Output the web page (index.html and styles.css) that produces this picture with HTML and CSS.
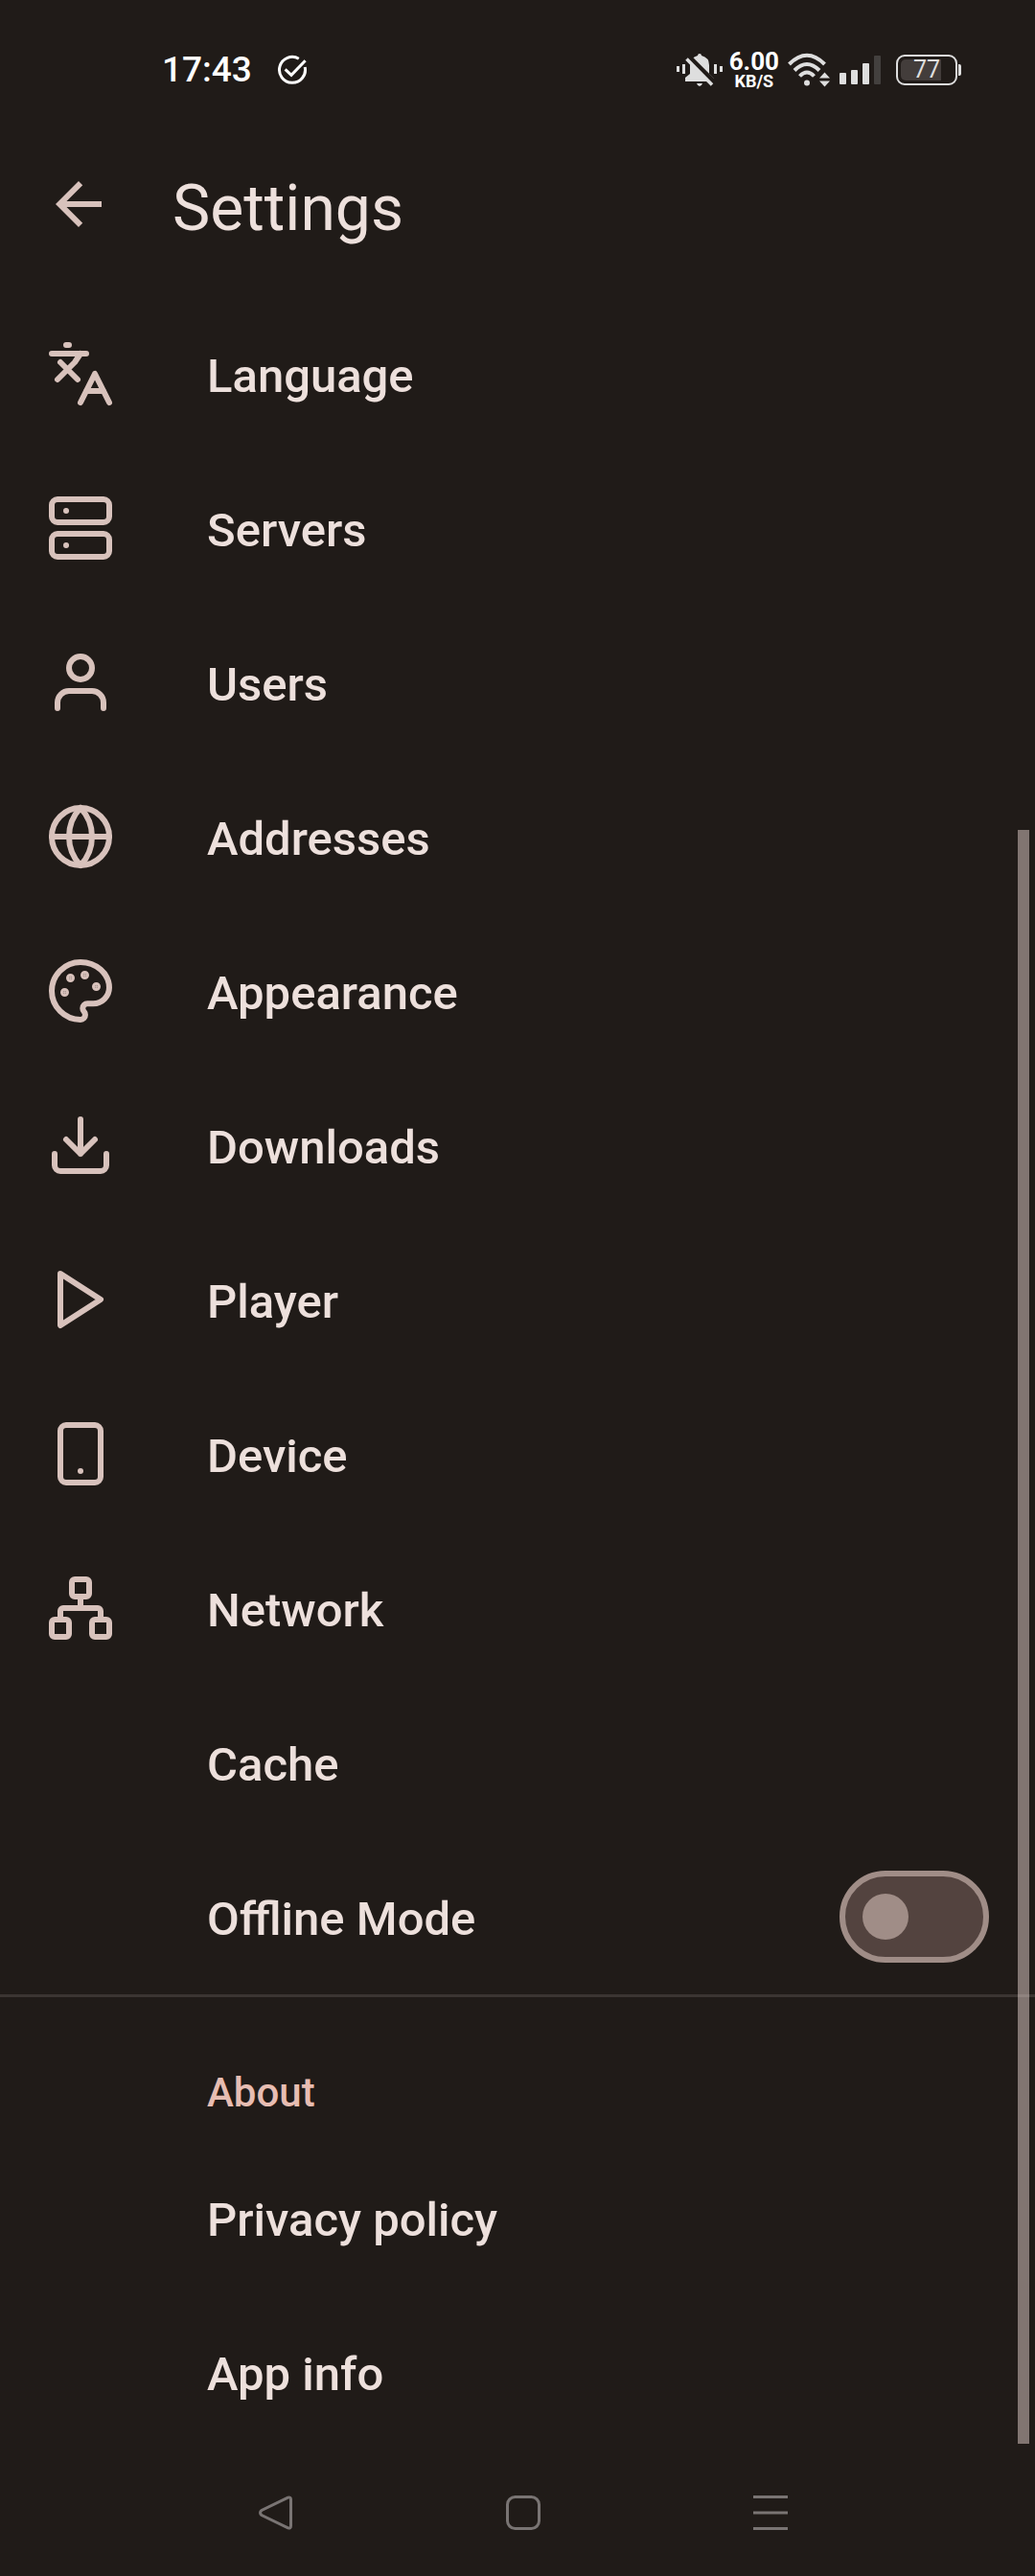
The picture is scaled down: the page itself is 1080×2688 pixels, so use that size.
FILE: index.html
```html
<!DOCTYPE html>
<html lang="en">
<head>
<meta charset="utf-8">
<meta name="viewport" content="width=device-width, initial-scale=1">
<title>Settings</title>
<link rel="stylesheet" href="styles.css">
</head>
<body>
<div class="status-bar">
  <span class="clock">17:43</span>
  <svg class="status-check" width="32" height="32" viewBox="0 0 32 32" fill="none" stroke="#fff" stroke-width="3" aria-hidden="true">
    <path d="M22.8 4.2A13.5 13.5 0 1 0 29.2 13"/><path d="M8.6 15.4l6.4 6L29.6 6.2"/>
  </svg>
  <div class="status-right">
    <svg width="48" height="34" viewBox="0 0 48 34" fill="#dedede" aria-hidden="true">
      <path d="M0 13h3v6H0zM6 11h3v10H6zM39 11h3v10h-3zM45 13h3v6h-3zM21 31h6q-1 3-3 3t-3-3z"/>
      <path d="M22 2q0-2 2-2t2 2q8 2 8 10v9l5 5v3H9v-4l5-4v-9q0-8 8-10z"/>
      <path d="M9 0L42 33" stroke="#201b18" stroke-width="6"/>
      <path d="M10.5 5.5L37 32.500" stroke="#dedede" stroke-width="3.500"/>
    </svg>
    <div class="speed"><span class="speed-value">6.00</span><span class="speed-unit">KB/S</span></div>
    <svg class="wifi" width="46" height="36" viewBox="0 0 46 36" aria-hidden="true">
      <g fill="none" stroke="#dedede" stroke-width="4">
        <path d="M2.500 12Q21 -6.500 39.500 12"/><path d="M8 18.500Q21 5.500 34 18.500"/><path d="M13.500 24.500Q21 16.500 28.500 24.500"/>
      </g>
      <circle cx="21" cy="31.500" r="3" fill="#dedede"/>
      <path d="M34 26.500l5.500-6 5.500 6zM34 29.500l5.500 6 5.500-6z" fill="#dedede"/>
    </svg>
    <svg class="signal" width="44" height="30" viewBox="0 0 44 30" fill="#dedede" aria-hidden="true">
      <rect y="18" width="7" height="12" rx="1"/><rect x="12" y="15" width="7" height="15" rx="1"/><rect x="24" y="8" width="7" height="22" rx="1"/><rect x="36" width="7" height="30" rx="1" fill="#43403e"/>
    </svg>
    <div class="battery"><span class="battery-level">77</span></div>
  </div>
</div>

<header class="app-bar">
  <button class="back" type="button" aria-label="Back">
    <svg width="72" height="72" viewBox="0 0 24 24" fill="currentColor"><path d="M20 11H7.830l5.590-5.590L12 4l-8 8 8 8 1.410-1.410L7.830 13H20z"/></svg>
  </button>
  <h1 class="title">Settings</h1>
</header>

<main class="content">
  <nav class="list" aria-label="Settings">
    <a class="row" href="#language"><svg class="icon" viewBox="0 0 24 24"><path d="m5 8 6 6M4 14l6-6 2-3M2 5h12M7 2h1M22 22l-5-10-5 10M14 18h6"/></svg><span class="label">Language</span></a>
    <a class="row" href="#servers"><svg class="icon" viewBox="0 0 24 24"><rect x="2" y="2" width="20" height="8" rx="2"/><rect x="2" y="14" width="20" height="8" rx="2"/><path d="M7 6h.01M7 18h.01"/></svg><span class="label">Servers</span></a>
    <a class="row" href="#users"><svg class="icon" viewBox="0 0 24 24"><path d="M20 21v-2a4 4 0 0 0-4-4H8a4 4 0 0 0-4 4v2"/><circle cx="12" cy="7" r="4"/></svg><span class="label">Users</span></a>
    <a class="row" href="#addresses"><svg class="icon" viewBox="0 0 24 24"><circle cx="12" cy="12" r="10"/><path d="M12 2a14.500 14.500 0 0 0 0 20 14.500 14.500 0 0 0 0-20M2 12h20"/></svg><span class="label">Addresses</span></a>
    <a class="row" href="#appearance"><svg class="icon" viewBox="0 0 24 24"><g fill="currentColor"><circle cx="13.500" cy="6.500" r=".5"/><circle cx="17.500" cy="10.500" r=".5"/><circle cx="8.500" cy="7.500" r=".5"/><circle cx="6.500" cy="12.500" r=".5"/></g><path d="M12 2C6.500 2 2 6.500 2 12s4.500 10 10 10c.926 0 1.648-.746 1.648-1.688 0-.437-.18-.835-.437-1.125-.29-.289-.438-.652-.438-1.125a1.640 1.640 0 0 1 1.668-1.668h1.996c3.051 0 5.555-2.503 5.555-5.554C21.965 6.012 17.461 2 12 2z"/></svg><span class="label">Appearance</span></a>
    <a class="row" href="#downloads"><svg class="icon" viewBox="0 0 24 24"><path d="M21 15v4a2 2 0 0 1-2 2H5a2 2 0 0 1-2-2v-4M7 10l5 5 5-5M12 15V3"/></svg><span class="label">Downloads</span></a>
    <a class="row" href="#player"><svg class="icon" viewBox="0 0 24 24"><path d="M5 3l14 9-14 9z"/></svg><span class="label">Player</span></a>
    <a class="row" href="#device"><svg class="icon" viewBox="0 0 24 24"><rect x="5" y="2" width="14" height="20" rx="2"/><path d="M12 18h.01"/></svg><span class="label">Device</span></a>
    <a class="row" href="#network"><svg class="icon" viewBox="0 0 24 24"><rect x="16" y="16" width="6" height="6" rx="1"/><rect x="2" y="16" width="6" height="6" rx="1"/><rect x="9" y="2" width="6" height="6" rx="1"/><path d="M5 16v-3a1 1 0 0 1 1-1h12a1 1 0 0 1 1 1v3M12 12V8"/></svg><span class="label">Network</span></a>
    <a class="row inset" href="#cache"><span class="label">Cache</span></a>
  </nav>
  <div class="row inset">
    <label class="label" for="offline">Offline Mode</label>
    <input class="switch" type="checkbox" role="switch" id="offline">
  </div>
  <section class="about">
    <h2 class="subheader">About</h2>
    <a class="row inset" href="#privacy"><span class="label">Privacy policy</span></a>
    <a class="row inset" href="#info"><span class="label">App info</span></a>
  </section>
  <div class="scroll-thumb"></div>
</main>

<footer class="system-nav">
  <button type="button" aria-label="Back"><svg width="36" height="36" viewBox="0 0 36 36"><path d="M30.500 2.200L3 15.500q-3 2.500 0 5L30.500 33.800q3 1 3-2V4.200q0-3-3-2z"/></svg></button>
  <button type="button" aria-label="Home"><svg width="36" height="36" viewBox="0 0 36 36"><rect x="1.500" y="1.500" width="33" height="33" rx="8"/></svg></button>
  <button type="button" aria-label="Recent apps"><svg width="36" height="36" viewBox="0 0 36 36"><path d="M0 1.500h36M0 18h36M0 34.500h36"/></svg></button>
</footer>
</body>
</html>
```
FILE: styles.css
```css
* {
  box-sizing: border-box;
}

body {
  margin: 0;
  min-height: 100vh;
  display: flex;
  flex-direction: column;
  background: #201b18;
  color: #ede0dc;
  font-family: Roboto, "Liberation Sans", sans-serif;
}

button {
  display: flex;
  padding: 0;
  border: 0;
  background: none;
  color: inherit;
}

.status-bar {
  display: flex;
  align-items: center;
  height: 118px;
  padding: 27px 81px 0 169px;
  color: #fff;
}

.clock {
  font-size: 37px;
  font-weight: 500;
  line-height: 44px;
}

.status-check {
  margin-left: 26px;
}

.status-right {
  display: flex;
  align-items: center;
  margin-left: auto;
}

.speed {
  display: flex;
  flex-direction: column;
  align-items: center;
  margin-left: 7px;
  font-weight: 700;
}

.speed-value {
  font-size: 26px;
  line-height: 24px;
}

.speed-unit {
  font-size: 18px;
  line-height: 18px;
}

.wifi {
  margin-left: 8px;
}

.signal {
  margin-left: 9px;
}

.battery {
  position: relative;
  width: 64px;
  height: 32px;
  margin-left: 15px;
  padding: 3px;
  border: 2px solid #dedede;
  border-radius: 9px;
}

.battery::after {
  content: "";
  position: absolute;
  top: 8px;
  right: -6px;
  width: 3px;
  height: 12px;
  border-radius: 0 2px 2px 0;
  background: #dedede;
}

.battery-level {
  display: block;
  width: 77%;
  height: 22px;
  padding-left: 13px;
  border-radius: 5px 0 0 5px;
  background: #433d3b;
  color: #dedede;
  font-size: 25px;
  line-height: 22px;
}

.app-bar {
  display: flex;
  align-items: flex-start;
  gap: 62px;
  height: 192px;
  padding: 59px 46px 0;
}

.back {
  color: #d8c2bc;
}

.title {
  margin: 0;
  font-size: 66px;
  font-weight: 400;
  line-height: 82px;
}

.content {
  position: relative;
}

.row {
  display: flex;
  align-items: flex-start;
  gap: 96px;
  height: 161px;
  padding: 44px 48px 0;
  color: inherit;
  text-decoration: none;
}

.row.inset {
  padding-left: 216px;
}

.icon {
  flex: none;
  width: 72px;
  height: 72px;
  color: #d8c2bc;
  fill: none;
  stroke: currentColor;
  stroke-width: 2;
  stroke-linecap: round;
  stroke-linejoin: round;
}

.label {
  flex: 1;
  font-size: 49px;
  font-weight: 500;
  line-height: 78px;
}

.switch {
  appearance: none;
  display: flex;
  align-items: center;
  width: 156px;
  height: 96px;
  margin: -12px 0 0;
  padding: 0 18px;
  border: 6px solid #a08d87;
  border-radius: 48px;
  background: #53433f;
}

.switch::before {
  content: "";
  width: 48px;
  height: 48px;
  border-radius: 50%;
  background: #a08d87;
}

.switch:checked {
  justify-content: flex-end;
}

.about {
  border-top: 3px solid #3b3532;
}

.subheader {
  margin: 0;
  padding: 76px 48px 26px 216px;
  color: #e7bdb2;
  font-size: 42px;
  font-weight: 500;
  line-height: 48px;
}

.scroll-thumb {
  position: absolute;
  right: 6px;
  bottom: 6px;
  width: 12px;
  height: 75%;
  background: rgba(237, 218, 215, 0.47);
}

.system-nav {
  display: grid;
  grid-template-columns: repeat(3, 1fr);
  justify-items: center;
  padding: 48px 147px 48px 159px;
}

.system-nav svg {
  fill: none;
  stroke: #797473;
  stroke-width: 3;
}
```
